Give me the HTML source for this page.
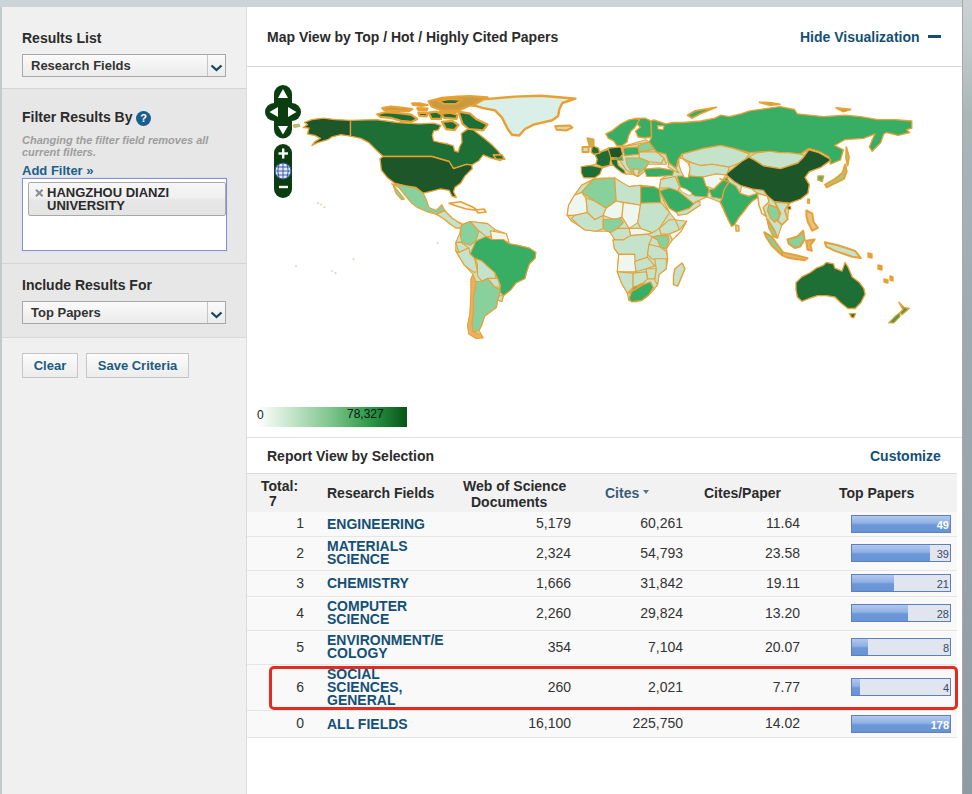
<!DOCTYPE html>
<html><head><meta charset="utf-8">
<style>
*{margin:0;padding:0;box-sizing:border-box}
html,body{width:972px;height:794px;overflow:hidden;background:#c9d0d5;font-family:"Liberation Sans",sans-serif;color:#333}
.abs{position:absolute}
#topbar{position:absolute;left:0;top:0;width:972px;height:7px;background:#cdd4d7}
#lbar{position:absolute;left:0;top:7px;width:2px;height:787px;background:#c1cbcd}
#side{position:absolute;left:2px;top:7px;width:245px;height:787px;background:#f0f0f0;border-right:1px solid #dcdcdc}
.sec2{position:absolute;left:0;width:244px;background:#e7e7e7;border-top:1px solid #d6d6d6}
.h{position:absolute;font-weight:bold;font-size:14px;line-height:16px;color:#2b2b2b;white-space:nowrap}
.sel{position:absolute;width:204px;height:23px;border:1px solid #a8a8a8;background:linear-gradient(#fafafa,#ebebeb);font-size:13px;color:#333;font-weight:bold}
.sel span{position:absolute;left:8px;top:3px;line-height:15px}
.sel i{position:absolute;right:0;top:0;width:18px;height:21px;border-left:1px solid #c4c4c4}

.btn{position:absolute;height:25px;border:1px solid #c6c6c6;background:linear-gradient(#fcfcfc,#ececec);font-size:13px;font-weight:bold;color:#1d5a80;text-align:center;line-height:23px}
#main{position:absolute;left:247px;top:7px;width:715px;height:787px;background:#fff}
#rbar{position:absolute;left:962px;top:0;width:10px;height:794px;background:linear-gradient(#cbd2d5 0px,#c3cacd 40px,#acb6b9 115px,#9faab0 315px,#8f9ba3 794px);border-left:1px solid #a2a8ac}
.t{position:absolute;font-size:14px;line-height:16px;white-space:nowrap;color:#333;text-align:right}
.f{position:absolute;left:327px;font-size:14px;font-weight:bold;color:#145075;line-height:13px;white-space:nowrap}
.row{position:absolute;left:247px;width:710px;background:#f9f9f9;border-bottom:1px solid #e6e6e6}
.bar{position:absolute;left:851px;width:100px;height:18px;border:1px solid #5f80b8;background:#e1e5ef}
.bar b{position:absolute;left:0;top:0;height:16px;background:linear-gradient(#b0c8ee 0%,#90b0e4 45%,#6c98d8 55%,#6893d6 100%)}
.bar span{position:absolute;right:1px;top:3px;font-size:11px;line-height:12px;color:#3a4a66}
.bar span.w{color:#fff;font-weight:bold}
</style></head><body>
<div id="topbar"></div>
<div id="lbar"></div>
<div id="side">
  <div class="h" style="left:20px;top:23px">Results List</div>
  <div class="sel" style="left:20px;top:47px"><span>Research Fields</span><i><svg width="18" height="21" style="position:absolute;left:0;top:0"><polyline points="3.5,10.5 8.5,15 13.5,10.5" fill="none" stroke="#17465a" stroke-width="2.3"/></svg></i></div>
  <div class="sec2" style="top:81px;height:176px"></div>
  <div class="sec2" style="top:256px;height:74px"></div>
  <div style="position:absolute;left:0;top:330px;width:244px;border-top:1px solid #d9d9d9"></div>
  <div class="h" style="left:20px;top:102px">Filter Results By</div>
  <div class="abs" style="left:134px;top:104px;width:15px;height:15px;border-radius:50%;background:#1a5e8e;color:#fff;font-size:11px;font-weight:bold;text-align:center;line-height:15px">?</div>
  <div class="abs" style="left:20px;top:127px;font-size:11px;line-height:12px;font-style:italic;font-weight:bold;color:#9d9d9d;white-space:nowrap">Changing the filter field removes all<br>current filters.</div>
  <div class="abs" style="left:20px;top:156px;font-size:13px;line-height:15px;font-weight:bold;color:#1b5f8c;white-space:nowrap">Add Filter »</div>
  <div class="abs" style="left:20px;top:171px;width:205px;height:73px;background:#fff;border:1px solid #8890d0;box-shadow:0 0 1px 1px #dde0ee"></div>
  <div class="abs" style="left:26px;top:175px;width:198px;height:34px;border:1px solid #aaaaa4;border-radius:2px;background:linear-gradient(#f6f6f6 0%,#f0f0f0 45%,#e6e6e6 55%,#e4e4e4 100%)"></div>
  <svg class="abs" style="left:33px;top:182px" width="9" height="8"><path d="M1 0.8L7.6 7.2M7.6 0.8L1 7.2" stroke="#8c8c8c" stroke-width="2"/></svg>
  <div class="abs" style="left:45px;top:179px;font-size:13px;line-height:13px;font-weight:bold;color:#2a2a2a;white-space:nowrap">HANGZHOU DIANZI<br>UNIVERSITY</div>
  <div class="h" style="left:20px;top:270px">Include Results For</div>
  <div class="sel" style="left:20px;top:294px"><span>Top Papers</span><i><svg width="18" height="21" style="position:absolute;left:0;top:0"><polyline points="3.5,10.5 8.5,15 13.5,10.5" fill="none" stroke="#17465a" stroke-width="2.3"/></svg></i></div>
  <div class="btn" style="left:20px;top:346px;width:56px">Clear</div>
  <div class="btn" style="left:84px;top:346px;width:103px">Save Criteria</div>
</div>
<div id="main">
  <div class="h" style="left:20px;top:22px">Map View by Top / Hot / Highly Cited Papers</div>
  <div class="h" style="left:553px;top:22px;color:#145075">Hide Visualization</div>
  <div class="abs" style="left:681px;top:28px;width:13px;height:3px;background:#124e72"></div>
  <div class="abs" style="left:0;top:59px;width:715px;height:1px;background:#d6d9dc"></div>
  <div class="abs" style="left:10px;top:400px;width:150px;height:20px;background:linear-gradient(90deg,#ffffff 0%,#c0e2c6 25%,#7cc48a 50%,#2c9a4a 75%,#075417 100%)"></div>
  <div class="abs" style="left:10px;top:401px;font-size:12px;line-height:14px;color:#222">0</div>
  <div class="abs" style="left:100px;top:400px;font-size:12px;line-height:14px;color:#111">78,327</div>
  <div class="abs" style="left:0;top:430px;width:715px;height:1px;background:#e0e0e0"></div>
  <div class="h" style="left:20px;top:441px">Report View by Selection</div>
  <div class="h" style="left:623px;top:441px;color:#145075">Customize</div>
  <div class="abs" style="left:0;top:466px;width:710px;height:39px;background:#f2f2f2;border-top:1px solid #dcdcdc"></div>
  <div class="h" style="left:14px;top:471px">Total:</div><div class="h" style="left:22px;top:486px">7</div>
  <div class="h" style="left:80px;top:478px">Research Fields</div>
  <div class="h" style="left:216px;top:471px">Web of Science</div><div class="h" style="left:224px;top:487px">Documents</div>
  <div class="h" style="left:358px;top:478px;color:#3b5a7c">Cites</div>
  <div class="abs" style="left:396px;top:483px;width:0;height:0;border-left:3.5px solid transparent;border-right:3.5px solid transparent;border-top:4px solid #5a708c"></div>
  <div class="h" style="left:457px;top:478px">Cites/Paper</div>
  <div class="h" style="left:592px;top:478px">Top Papers</div>
</div>
<div class="row" style="top:512px;height:25px"></div>
<div class="t" style="left:254px;width:50px;top:515px">1</div>
<div class="f" style="top:518px">ENGINEERING</div>
<div class="t" style="left:471px;width:100px;top:515px">5,179</div>
<div class="t" style="left:583px;width:100px;top:515px">60,261</div>
<div class="t" style="left:700px;width:100px;top:515px">11.64</div>
<div class="bar" style="top:515px"><b style="width:98px"></b><span class="w">49</span></div>
<div class="row" style="top:537px;height:34px"></div>
<div class="t" style="left:254px;width:50px;top:545px">2</div>
<div class="f" style="top:540px">MATERIALS<br>SCIENCE</div>
<div class="t" style="left:471px;width:100px;top:545px">2,324</div>
<div class="t" style="left:583px;width:100px;top:545px">54,793</div>
<div class="t" style="left:700px;width:100px;top:545px">23.58</div>
<div class="bar" style="top:544px"><b style="width:78px"></b><span class="">39</span></div>
<div class="row" style="top:571px;height:26px"></div>
<div class="t" style="left:254px;width:50px;top:575px">3</div>
<div class="f" style="top:577px">CHEMISTRY</div>
<div class="t" style="left:471px;width:100px;top:575px">1,666</div>
<div class="t" style="left:583px;width:100px;top:575px">31,842</div>
<div class="t" style="left:700px;width:100px;top:575px">19.11</div>
<div class="bar" style="top:574px"><b style="width:42px"></b><span class="">21</span></div>
<div class="row" style="top:597px;height:34px"></div>
<div class="t" style="left:254px;width:50px;top:605px">4</div>
<div class="f" style="top:600px">COMPUTER<br>SCIENCE</div>
<div class="t" style="left:471px;width:100px;top:605px">2,260</div>
<div class="t" style="left:583px;width:100px;top:605px">29,824</div>
<div class="t" style="left:700px;width:100px;top:605px">13.20</div>
<div class="bar" style="top:604px"><b style="width:56px"></b><span class="">28</span></div>
<div class="row" style="top:631px;height:34px"></div>
<div class="t" style="left:254px;width:50px;top:639px">5</div>
<div class="f" style="top:634px">ENVIRONMENT/E<br>COLOGY</div>
<div class="t" style="left:471px;width:100px;top:639px">354</div>
<div class="t" style="left:583px;width:100px;top:639px">7,104</div>
<div class="t" style="left:700px;width:100px;top:639px">20.07</div>
<div class="bar" style="top:638px"><b style="width:16px"></b><span class="">8</span></div>
<div class="row" style="top:665px;height:46px"></div>
<div class="t" style="left:254px;width:50px;top:679px">6</div>
<div class="f" style="top:668px">SOCIAL<br>SCIENCES,<br>GENERAL</div>
<div class="t" style="left:471px;width:100px;top:679px">260</div>
<div class="t" style="left:583px;width:100px;top:679px">2,021</div>
<div class="t" style="left:700px;width:100px;top:679px">7.77</div>
<div class="bar" style="top:678px"><b style="width:8px"></b><span class="">4</span></div>
<div class="row" style="top:711px;height:27px"></div>
<div class="t" style="left:254px;width:50px;top:715px">0</div>
<div class="f" style="top:718px">ALL FIELDS</div>
<div class="t" style="left:471px;width:100px;top:715px">16,100</div>
<div class="t" style="left:583px;width:100px;top:715px">225,750</div>
<div class="t" style="left:700px;width:100px;top:715px">14.02</div>
<div class="bar" style="top:715px"><b style="width:98px"></b><span class="w">178</span></div>
<svg class="abs" style="left:0;top:0" width="972" height="794" viewBox="0 0 972 794">
<polygon points="460.7,224.9 470.2,221.5 487.5,223.6 494.7,229.4 506.3,233.7 509.1,243.8 517.8,245.2 529.3,248.1 535.8,252.4 535.1,258.2 529.3,264.0 526.4,272.6 525.0,278.4 516.3,282.7 510.6,289.9 503.4,295.7 501.9,301.4 497.7,300.2 496.3,307.4 490.5,311.8 484.7,316.1 481.9,324.7 479.0,330.5 483.3,337.7 476.1,338.5 469.0,334.0 467.5,326.0 470.0,313.2 471.0,291.6 471.0,278.6 473.2,274.3 464.5,265.4 455.8,251.0 455.8,242.4 460.2,232.3" fill="#c5e2ca" stroke="#e8a035" stroke-width="1.10" stroke-linejoin="round"/>
<polygon points="581.6,185.2 593.1,179.4 601.8,178.0 614.7,178.0 620.5,183.7 629.1,186.6 640.7,185.2 653.6,186.6 659.4,189.5 663.7,201.0 669.5,212.5 675.2,219.7 686.7,221.2 681.0,231.3 672.3,239.9 666.6,248.5 667.7,258.7 666.3,268.8 659.0,274.6 657.6,284.6 653.3,290.4 646.1,297.6 636.0,301.9 628.8,300.5 627.4,293.3 621.6,283.2 617.3,271.7 618.7,254.4 614.4,248.6 613.0,240.0 614.7,239.9 613.3,232.7 607.5,231.3 596.0,231.3 584.5,229.8 578.7,225.5 571.5,221.2 567.2,215.4 568.6,205.3 574.4,195.2" fill="#c5e2ca" stroke="#e8a035" stroke-width="1.10" stroke-linejoin="round"/>
<polygon points="581.2,166.7 591.1,165.4 596.0,164.2 597.3,159.3 594.8,154.3 608.4,148.1 622.0,146.9 638.0,142.0 645.8,139.7 649.1,142.0 656.5,151.9 665.9,154.1 668.8,162.8 661.5,163.0 649.1,161.7 646.7,164.2 644.2,171.6 638.0,176.5 631.9,174.1 625.7,174.1 618.3,165.4 609.6,165.4 602.2,167.9 599.8,174.1 594.8,177.8 583.7,177.8" fill="#c5e2ca" stroke="#e8a035" stroke-width="1.10" stroke-linejoin="round"/>
<polygon points="676.0,168.5 681.8,154.1 703.4,148.4 749.5,152.7 800.2,154.1 808.8,149.8 829.0,158.5 830.9,160.1 820.8,167.3 809.3,171.6 805.0,177.4 809.3,184.6 807.9,193.2 800.7,199.0 789.1,203.3 787.7,219.1 781.9,224.9 777.6,237.9 769.0,227.8 766.1,216.3 757.4,193.2 744.5,210.5 731.5,226.3 720.0,201.9 707.0,197.0 695.0,202.0 700.0,205.3 686.7,214.0 676.7,212.5 669.5,208.2 659.4,190.9 660.8,179.4 673.8,170.4" fill="#c5e2ca" stroke="#e8a035" stroke-width="1.10" stroke-linejoin="round"/>
<polygon points="304.6,122.4 311.9,119.6 323.4,118.1 334.9,119.6 350.5,120.3 350.5,136.1 340.7,134.7 332.0,136.9 327.7,139.7 317.6,142.6 311.9,145.5 314.7,141.9 320.5,138.3 314.7,135.4 307.5,134.0 309.0,128.2 303.2,127.5 307.5,124.6" fill="#1c5629" stroke="#e8a035" stroke-width="1.32" stroke-linejoin="round"/>
<polygon points="350.5,120.3 376.0,119.6 397.6,122.5 419.2,123.9 433.6,123.2 440.8,125.3 438.5,129.8 433.6,131.0 432.3,135.4 433.6,140.9 438.5,142.2 447.8,144.0 453.3,145.9 454.6,150.8 458.3,152.0 459.5,147.1 462.0,142.2 461.4,133.5 465.7,130.4 470.6,127.3 476.0,132.0 483.2,137.6 491.9,144.8 497.6,150.6 503.4,157.8 500.5,160.7 490.4,157.8 483.2,154.9 478.9,160.7 471.7,165.0 466.4,164.4 453.5,168.7 449.1,161.5 431.9,156.5 383.2,156.5 377.5,151.3 368.8,142.6 360.8,138.3 350.5,136.1" fill="#1d6f35" stroke="#e8a035" stroke-width="1.32" stroke-linejoin="round"/>
<polygon points="493.3,154.9 502.0,154.9 504.8,159.2 496.2,159.2" fill="#1d6f35" stroke="#e8a035" stroke-width="1.65" stroke-linejoin="round"/>
<polygon points="383.2,156.5 431.9,156.5 449.1,161.5 453.5,168.7 466.4,164.4 471.7,165.0 472.2,168.7 465.0,175.9 460.7,183.1 454.9,187.4 453.5,191.8 456.3,197.5 452.0,196.1 449.1,190.3 440.5,188.9 429.0,191.8 423.2,193.2 416.0,187.4 405.9,186.0 394.4,183.1 387.2,177.4 381.4,170.2 380.0,158.6" fill="#1c5629" stroke="#e8a035" stroke-width="1.32" stroke-linejoin="round"/>
<polygon points="391.5,183.8 405.9,186.0 416.0,188.2 423.2,193.2 426.1,199.0 429.0,207.6 436.2,210.5 441.9,204.7 444.8,210.5 436.2,214.1 427.5,211.9 417.4,207.6 411.7,203.3 404.5,194.6 398.7,187.4" fill="#88d09c" stroke="#e8a035" stroke-width="1.10" stroke-linejoin="round"/>
<polygon points="393.0,184.6 398.7,191.8 404.5,199.0 401.6,199.7 395.8,193.2" fill="#88d09c" stroke="#e8a035" stroke-width="1.10" stroke-linejoin="round"/>
<polygon points="436.2,214.1 444.8,210.5 447.0,213.0 452.0,218.0 458.0,222.0 462.0,224.0 461.0,228.0 456.0,228.0 450.0,224.0 444.0,219.0" fill="#c5e2ca" stroke="#e8a035" stroke-width="1.43" stroke-linejoin="round"/>
<polygon points="449.1,203.3 460.7,201.8 473.6,207.6 477.9,210.5 466.4,209.0 454.9,205.5" fill="#eef7ef" stroke="#e8a035" stroke-width="1.65" stroke-linejoin="round"/>
<polygon points="476.0,210.0 484.0,209.0 486.0,212.0 478.0,213.0" fill="#eef7ef" stroke="#e8a035" stroke-width="1.65" stroke-linejoin="round"/>
<polygon points="382.3,108.1 390.6,106.5 400.9,107.5 412.2,109.1 409.1,111.1 395.7,111.1 384.4,110.1" fill="#c89a42" stroke="#e8a035" stroke-width="2.20" stroke-linejoin="round"/>
<polygon points="377.2,114.2 385.4,112.2 398.8,113.2 411.2,114.7 417.3,118.9 411.2,121.9 400.9,120.9 390.6,117.8 380.3,116.8" fill="#1d6f35" stroke="#e8a035" stroke-width="2.20" stroke-linejoin="round"/>
<polygon points="412.2,103.4 419.4,103.4 427.6,105.0 421.4,106.0 413.2,105.0" fill="#c89a42" stroke="#e8a035" stroke-width="2.20" stroke-linejoin="round"/>
<polygon points="417.3,108.1 427.6,108.6 426.6,110.6 418.4,110.1" fill="#c89a42" stroke="#e8a035" stroke-width="2.20" stroke-linejoin="round"/>
<polygon points="418.4,112.7 427.6,113.2 426.6,116.3 419.4,115.8" fill="#1d6f35" stroke="#e8a035" stroke-width="2.20" stroke-linejoin="round"/>
<polygon points="428.6,101.4 442.0,97.8 457.4,96.7 470.0,96.2 487.5,97.3 476.0,105.9 470.0,105.5 458.5,110.6 442.0,110.6 431.7,106.5" fill="#c89a42" stroke="#e8a035" stroke-width="2.20" stroke-linejoin="round"/>
<polygon points="438.0,101.0 450.0,99.0 462.0,100.0 456.0,104.0 444.0,104.0" fill="#1d6f35" stroke="#e8a035" stroke-width="2.20" stroke-linejoin="round"/>
<polygon points="428.6,112.7 436.9,111.7 442.0,114.7 441.0,118.9 431.7,118.9" fill="#1d6f35" stroke="#e8a035" stroke-width="2.20" stroke-linejoin="round"/>
<polygon points="441.0,113.7 450.2,112.7 457.4,114.7 456.4,118.9 444.1,117.8" fill="#1d6f35" stroke="#e8a035" stroke-width="2.20" stroke-linejoin="round"/>
<polygon points="442.0,121.9 452.3,120.9 458.5,125.0 454.4,130.2 446.1,129.1" fill="#1d6f35" stroke="#e8a035" stroke-width="2.20" stroke-linejoin="round"/>
<polygon points="458.5,111.7 470.0,113.7 476.0,118.9 487.5,124.6 483.2,130.4 468.8,129.0 462.6,124.0" fill="#1d6f35" stroke="#e8a035" stroke-width="2.20" stroke-linejoin="round"/>
<polygon points="440.0,111.7 457.3,111.7 452.0,113.0 440.0,113.0" fill="#c89a42" stroke="#e8a035" stroke-width="2.20" stroke-linejoin="round"/>
<polygon points="473.1,105.2 483.2,99.4 514.9,96.6 540.8,95.8 559.5,97.3 575.4,98.7 562.4,103.0 559.5,108.8 558.1,116.0 552.3,120.3 533.6,124.6 525.0,129.0 519.2,135.5 512.0,134.7 507.7,129.0 501.9,117.4 494.7,110.2 483.2,108.1" fill="#d9efe8" stroke="#e8a035" stroke-width="2.42" stroke-linejoin="round"/>
<polygon points="555.2,126.1 569.6,125.4 572.5,127.5 566.7,130.4 556.7,129.7" fill="#cfd8b0" stroke="#e8a035" stroke-width="1.98" stroke-linejoin="round"/>
<polygon points="461.6,225.1 470.2,221.5 478.9,230.8 476.0,240.9 470.2,245.2 461.6,242.4 460.2,232.3" fill="#88d09c" stroke="#e8a035" stroke-width="1.10" stroke-linejoin="round"/>
<polygon points="470.2,221.5 487.5,223.6 494.7,229.4 490.4,236.6 486.1,236.6 478.9,230.8" fill="#c5e2ca" stroke="#e8a035" stroke-width="1.10" stroke-linejoin="round"/>
<polygon points="490.4,230.8 506.3,233.7 509.1,242.4 491.9,239.5" fill="#eef7ef" stroke="#e8a035" stroke-width="1.10" stroke-linejoin="round"/>
<polygon points="455.8,242.4 461.6,242.4 468.8,248.1 458.7,252.4" fill="#c5e2ca" stroke="#e8a035" stroke-width="1.10" stroke-linejoin="round"/>
<polygon points="458.7,252.4 468.8,248.1 470.2,253.9 474.6,258.2 477.4,271.2 474.6,272.6 464.5,265.4 455.8,251.0" fill="#c5e2ca" stroke="#e8a035" stroke-width="1.10" stroke-linejoin="round"/>
<polygon points="470.2,253.9 476.0,240.9 486.1,236.6 491.9,239.5 503.4,239.5 509.1,243.8 517.8,245.2 529.3,248.1 535.8,252.4 535.1,258.2 529.3,264.0 526.4,272.6 525.0,278.4 516.3,282.7 510.6,289.9 503.4,295.7 499.1,291.3 500.5,285.6 497.6,278.4 494.7,272.6 487.5,266.9 481.8,261.1 474.6,258.2" fill="#38ad64" stroke="#e8a035" stroke-width="1.10" stroke-linejoin="round"/>
<polygon points="474.6,258.2 481.8,261.1 494.7,272.6 496.2,279.8 487.5,278.4 481.8,281.3 477.4,275.5 477.4,264.0" fill="#c5e2ca" stroke="#e8a035" stroke-width="1.10" stroke-linejoin="round"/>
<polygon points="487.5,278.4 497.6,278.4 500.5,287.0 494.7,287.0" fill="#c5e2ca" stroke="#e8a035" stroke-width="1.10" stroke-linejoin="round"/>
<polygon points="476.1,281.5 481.8,281.3 487.5,278.4 494.7,287.0 500.5,289.9 497.7,300.2 496.3,307.4 490.5,311.8 484.7,316.1 481.9,324.7 479.0,330.5 473.2,331.9 471.8,324.7 473.2,313.2 473.2,298.8" fill="#88d09c" stroke="#e8a035" stroke-width="1.10" stroke-linejoin="round"/>
<polygon points="499.1,295.7 503.4,295.7 501.9,301.4 497.6,300.0" fill="#c5e2ca" stroke="#e8a035" stroke-width="1.10" stroke-linejoin="round"/>
<polygon points="473.2,274.3 476.0,281.5 473.2,298.8 473.2,313.2 471.8,324.7 473.2,331.9 479.0,333.4 483.3,337.7 476.1,338.5 469.0,334.0 467.5,326.0 470.0,313.2 471.0,291.6 471.0,278.6" fill="#e9b060" stroke="#e8a035" stroke-width="0.88" stroke-linejoin="round"/>
<polygon points="622.0,146.9 649.1,142.0 656.5,151.9 664.0,158.0 666.4,164.2 646.7,164.2 644.2,171.6 638.0,176.5 631.9,174.1 625.7,169.1 620.7,161.7 622.0,155.6" fill="#c5e2ca" stroke="#e8a035" stroke-width="1.10" stroke-linejoin="round"/>
<polygon points="623.2,148.1 638.0,146.9 639.3,154.3 624.4,155.6" fill="#38ad64" stroke="#e8a035" stroke-width="1.10" stroke-linejoin="round"/>
<polygon points="639.3,151.9 656.5,151.9 664.0,158.0 661.5,163.0 649.1,161.7 639.3,158.0" fill="#c5e2ca" stroke="#e8a035" stroke-width="1.10" stroke-linejoin="round"/>
<polygon points="638.0,145.7 649.1,142.0 654.1,149.4 639.3,151.9" fill="#88d09c" stroke="#e8a035" stroke-width="1.10" stroke-linejoin="round"/>
<polygon points="625.7,158.0 639.3,158.0 649.1,161.7 646.7,166.7 638.0,174.1 631.9,172.8 626.9,164.2" fill="#88d09c" stroke="#e8a035" stroke-width="1.10" stroke-linejoin="round"/>
<polygon points="633.1,169.1 639.3,169.1 638.0,176.5 634.3,174.1" fill="#c5e2ca" stroke="#e8a035" stroke-width="1.10" stroke-linejoin="round"/>
<polygon points="610.9,158.0 622.0,155.6 623.2,160.5 617.0,160.5" fill="#38ad64" stroke="#e8a035" stroke-width="1.10" stroke-linejoin="round"/>
<polygon points="608.4,148.1 620.7,146.9 622.6,154.3 619.5,158.0 609.6,157.4" fill="#1c5629" stroke="#e8a035" stroke-width="1.10" stroke-linejoin="round"/>
<polygon points="594.8,154.3 608.4,149.4 610.9,158.0 609.6,165.4 602.2,166.7 596.0,164.2 597.3,159.3" fill="#1d6f35" stroke="#e8a035" stroke-width="1.10" stroke-linejoin="round"/>
<polygon points="581.2,166.7 591.1,165.4 602.2,167.9 599.8,174.1 594.8,177.8 583.7,177.8 581.2,172.8" fill="#1d6f35" stroke="#e8a035" stroke-width="1.10" stroke-linejoin="round"/>
<polygon points="610.9,159.3 617.0,159.3 618.3,165.4 624.4,170.4 625.7,174.1 622.0,172.8 615.8,167.9 612.1,164.2" fill="#1d6f35" stroke="#e8a035" stroke-width="1.10" stroke-linejoin="round"/>
<polygon points="592.3,145.7 598.5,148.1 599.8,153.1 593.6,154.3 591.1,151.9" fill="#1d6f35" stroke="#e8a035" stroke-width="1.43" stroke-linejoin="round"/>
<polygon points="587.4,138.3 593.6,139.5 593.6,145.7 589.9,146.9" fill="#9fc070" stroke="#e8a035" stroke-width="1.98" stroke-linejoin="round"/>
<polygon points="582.5,146.9 588.6,146.9 588.6,151.9 582.5,151.9" fill="#c5e2ca" stroke="#e8a035" stroke-width="1.98" stroke-linejoin="round"/>
<polygon points="644.2,169.1 659.0,167.9 673.8,170.4 672.6,175.3 656.5,176.5 646.7,176.5" fill="#38ad64" stroke="#e8a035" stroke-width="1.10" stroke-linejoin="round"/>
<polygon points="605.8,133.9 612.3,130.6 620.6,124.0 628.8,119.9 636.0,118.5 640.0,119.0 637.0,124.0 634.5,128.0 631.0,131.0 628.5,136.0 627.0,142.0 622.0,145.7 617.0,145.7 613.3,140.7 608.4,138.3" fill="#38ad64" stroke="#e8a035" stroke-width="1.32" stroke-linejoin="round"/>
<polygon points="636.0,118.5 645.3,118.2 651.0,121.0 651.6,137.0 645.0,138.0 638.0,137.0 635.5,131.0 640.5,127.3 637.0,124.0 640.0,119.0" fill="#38ad64" stroke="#e8a035" stroke-width="1.32" stroke-linejoin="round"/>
<polygon points="654.0,120.0 665.9,123.9 673.1,122.5 683.2,122.5 700.5,121.0 714.9,118.1 720.7,115.2 729.3,116.7 740.8,113.8 749.5,110.9 763.9,108.8 780.0,106.6 794.4,109.5 797.3,113.8 823.2,116.7 844.8,115.2 860.7,116.7 877.9,119.6 895.2,119.6 911.8,121.0 911.8,128.2 906.7,129.7 909.6,132.5 898.1,135.4 886.6,132.5 883.7,134.0 880.8,142.6 872.2,151.3 869.3,146.9 872.2,139.7 875.1,134.0 863.5,138.3 844.8,139.7 834.7,145.5 843.4,149.8 840.5,159.9 830.4,164.2 829.0,157.0 818.9,151.3 808.8,148.4 800.2,154.1 788.6,152.7 780.0,152.7 769.6,151.3 749.5,152.7 733.6,148.4 720.7,145.5 703.4,148.4 681.8,154.1 678.0,160.0 676.0,168.5 668.8,162.8 665.9,154.1 656.5,151.9 649.1,142.0 651.6,137.0 651.0,121.0" fill="#38ad64" stroke="#e8a035" stroke-width="1.32" stroke-linejoin="round"/>
<polygon points="687.5,115.2 694.7,110.9 716.3,107.3 700.5,113.8 691.9,118.1" fill="#38ad64" stroke="#e8a035" stroke-width="1.76" stroke-linejoin="round"/>
<polygon points="759.5,102.3 772.5,103.0 780.0,104.4 769.6,105.2" fill="#38ad64" stroke="#e8a035" stroke-width="1.76" stroke-linejoin="round"/>
<polygon points="836.2,108.0 850.6,109.5 843.4,111.6" fill="#38ad64" stroke="#e8a035" stroke-width="1.76" stroke-linejoin="round"/>
<polygon points="681.8,154.1 703.4,148.4 720.7,145.5 733.6,148.4 749.5,154.1 743.7,161.3 729.3,167.1 712.0,164.2 700.5,165.6 691.9,162.8 683.2,158.5" fill="#c5e2ca" stroke="#e8a035" stroke-width="1.10" stroke-linejoin="round"/>
<polygon points="689.0,162.0 700.5,165.6 712.0,164.2 729.3,167.1 727.0,175.0 716.0,174.0 703.0,177.0 690.0,176.0" fill="#c5e2ca" stroke="#e8a035" stroke-width="1.10" stroke-linejoin="round"/>
<polygon points="668.8,162.8 676.0,168.5 679.0,173.0 673.8,170.4 668.0,167.0" fill="#c5e2ca" stroke="#e8a035" stroke-width="1.10" stroke-linejoin="round"/>
<polygon points="677.0,176.0 690.0,176.0 703.0,177.0 706.0,184.0 709.0,190.0 707.0,197.0 695.0,196.0 686.0,191.0 680.0,186.0" fill="#38ad64" stroke="#e8a035" stroke-width="1.10" stroke-linejoin="round"/>
<polygon points="703.0,177.0 716.0,174.0 726.0,175.0 721.0,182.0 714.0,189.0 706.0,186.0" fill="#eef7ef" stroke="#e8a035" stroke-width="1.10" stroke-linejoin="round"/>
<polygon points="709.0,190.0 714.0,189.0 721.0,182.0 727.0,177.0 729.0,182.0 724.0,190.0 722.0,199.0 712.0,197.0" fill="#38ad64" stroke="#e8a035" stroke-width="1.10" stroke-linejoin="round"/>
<polygon points="660.8,179.4 675.2,176.5 679.5,186.6 678.1,190.9 669.5,188.0 659.4,188.0" fill="#c5e2ca" stroke="#e8a035" stroke-width="1.10" stroke-linejoin="round"/>
<polygon points="659.4,190.9 669.5,188.0 678.1,190.9 685.3,196.7 694.0,203.9 689.6,208.2 676.7,212.5 669.5,208.2" fill="#38ad64" stroke="#e8a035" stroke-width="1.10" stroke-linejoin="round"/>
<polygon points="676.7,212.5 689.6,208.2 695.4,202.4 700.0,201.0 700.0,205.3 686.7,214.0 678.1,215.4" fill="#c5e2ca" stroke="#e8a035" stroke-width="1.10" stroke-linejoin="round"/>
<polygon points="748.8,157.2 756.0,152.9 769.6,151.3 780.0,152.7 788.6,152.7 800.2,154.1 806.4,155.8 803.5,161.5 797.8,163.0 780.5,168.7 763.2,165.8 754.6,160.1" fill="#c5e2ca" stroke="#e8a035" stroke-width="1.10" stroke-linejoin="round"/>
<polygon points="726.4,175.0 727.2,173.0 734.4,167.3 741.6,161.5 748.8,157.2 754.6,160.1 763.2,165.8 780.5,168.7 797.8,163.0 803.5,157.2 808.8,149.8 818.9,152.7 829.0,158.5 830.9,160.1 820.8,167.3 809.3,171.6 805.0,177.4 809.3,184.6 807.9,193.2 800.7,199.0 789.1,203.3 774.7,201.9 767.5,196.1 763.2,190.3 751.7,188.9 741.6,186.0 734.4,181.7" fill="#1c5629" stroke="#e8a035" stroke-width="1.32" stroke-linejoin="round"/>
<polygon points="787.7,206.2 790.6,206.5 791.0,209.0 788.0,209.5" fill="#1c5629" stroke="#e8a035" stroke-width="1.10" stroke-linejoin="round"/>
<polygon points="817.9,175.9 823.7,175.9 822.3,181.7 817.9,180.2" fill="#5ab070" stroke="#e8a035" stroke-width="1.32" stroke-linejoin="round"/>
<polygon points="825.1,184.6 835.2,178.8 842.4,173.0 845.3,164.4 846.7,171.6 843.9,178.8 835.2,183.1 826.6,187.4" fill="#a8c878" stroke="#e8a035" stroke-width="1.98" stroke-linejoin="round"/>
<polygon points="846.3,147.0 849.1,157.0 847.7,165.7 846.0,158.0" fill="#a8c878" stroke="#e8a035" stroke-width="1.65" stroke-linejoin="round"/>
<polygon points="720.0,178.8 728.6,181.7 735.8,186.0 740.2,193.2 748.8,196.1 757.4,193.2 760.3,196.1 753.1,200.4 748.8,204.7 744.5,210.5 738.7,217.7 734.4,224.9 731.5,226.3 725.8,214.8 722.9,207.6 720.0,201.9 722.0,199.0 724.0,190.0 729.0,182.0" fill="#38ad64" stroke="#e8a035" stroke-width="1.32" stroke-linejoin="round"/>
<polygon points="735.8,225.0 738.7,226.0 739.0,231.0 736.0,231.0" fill="#c5e2ca" stroke="#e8a035" stroke-width="1.43" stroke-linejoin="round"/>
<polygon points="741.6,186.0 751.7,188.9 757.4,193.2 748.8,196.1 740.2,193.2" fill="#eef7ef" stroke="#e8a035" stroke-width="1.10" stroke-linejoin="round"/>
<polygon points="757.4,193.2 767.5,196.1 769.0,201.9 763.2,207.6 766.1,216.3 761.8,213.4 758.9,204.7" fill="#eef7ef" stroke="#e8a035" stroke-width="1.43" stroke-linejoin="round"/>
<polygon points="769.0,204.7 777.6,207.6 780.5,217.7 774.7,222.0 770.4,217.7 767.5,210.5" fill="#88d09c" stroke="#e8a035" stroke-width="1.43" stroke-linejoin="round"/>
<polygon points="774.7,201.9 789.1,203.3 784.8,210.5 787.7,219.1 781.9,224.9 777.6,220.6 780.5,213.4" fill="#c5e2ca" stroke="#e8a035" stroke-width="1.65" stroke-linejoin="round"/>
<polygon points="767.5,219.1 774.7,230.7 777.6,237.9 773.3,236.4 769.0,227.8" fill="#88d09c" stroke="#e8a035" stroke-width="1.65" stroke-linejoin="round"/>
<polygon points="806.4,210.5 812.2,213.4 813.6,222.0 817.9,227.8 812.2,230.7 807.9,222.0 806.4,216.3" fill="#e8c080" stroke="#e8a035" stroke-width="1.98" stroke-linejoin="round"/>
<polygon points="807.9,199.0 809.5,199.5 809.3,203.3 807.5,203.0" fill="#e8c080" stroke="#e8a035" stroke-width="1.43" stroke-linejoin="round"/>
<polygon points="764.3,232.2 771.5,236.5 778.7,246.6 783.0,252.4 780.2,253.8 771.5,245.2 765.8,236.5" fill="#88d09c" stroke="#e8a035" stroke-width="1.98" stroke-linejoin="round"/>
<polygon points="783.0,252.4 796.0,255.2 807.5,258.1 804.6,260.3 788.8,258.1 781.6,255.2" fill="#d8b878" stroke="#e8a035" stroke-width="1.98" stroke-linejoin="round"/>
<polygon points="787.4,239.4 797.4,236.5 803.2,230.8 804.6,239.4 800.3,246.6 794.6,248.0 788.8,243.7" fill="#88d09c" stroke="#e8a035" stroke-width="1.98" stroke-linejoin="round"/>
<polygon points="806.1,240.8 814.7,239.4 810.4,245.2 811.9,250.9 807.5,249.5" fill="#d8b878" stroke="#e8a035" stroke-width="1.98" stroke-linejoin="round"/>
<polygon points="824.8,242.3 837.8,245.2 846.4,248.0 855.1,250.9 860.8,258.1 852.2,256.7 843.5,253.8 834.9,250.9 826.3,246.6" fill="#c5e2ca" stroke="#e8a035" stroke-width="1.98" stroke-linejoin="round"/>
<polygon points="868.0,253.0 872.0,254.0 872.0,258.0 868.0,257.0" fill="#e8a035" stroke="#e8a035" stroke-width="1.32" stroke-linejoin="round"/>
<polygon points="878.0,265.0 882.0,266.0 882.0,270.0 878.0,269.0" fill="#e8a035" stroke="#e8a035" stroke-width="1.32" stroke-linejoin="round"/>
<polygon points="890.0,276.0 893.0,277.0 893.0,281.0 890.0,280.0" fill="#e8a035" stroke="#e8a035" stroke-width="1.32" stroke-linejoin="round"/>
<polygon points="884.0,279.0 888.0,280.0 888.0,283.0 884.0,282.0" fill="#e8a035" stroke="#e8a035" stroke-width="1.32" stroke-linejoin="round"/>
<polygon points="796.0,282.6 801.8,276.9 810.4,272.5 816.2,268.2 823.4,265.3 826.3,262.4 833.5,263.9 834.9,268.2 842.1,271.1 845.0,262.4 847.9,266.8 852.2,276.9 859.4,282.6 863.7,288.4 865.1,294.1 860.8,302.8 855.1,308.5 847.9,308.5 840.7,302.8 834.9,297.0 826.3,295.6 817.6,295.6 809.0,298.5 801.8,301.3 797.4,297.0 796.0,289.8" fill="#1d6f35" stroke="#e8a035" stroke-width="1.32" stroke-linejoin="round"/>
<polygon points="849.5,313.7 855.7,313.7 853.7,317.8 851.6,317.3" fill="#1d6f35" stroke="#e8a035" stroke-width="1.32" stroke-linejoin="round"/>
<polygon points="898.9,302.3 904.1,307.5 909.2,308.5 902.0,314.7 900.0,312.6 903.0,309.5" fill="#4a9a50" stroke="#e8a035" stroke-width="1.43" stroke-linejoin="round"/>
<polygon points="900.0,312.6 895.8,315.7 891.7,319.8 888.6,322.9 893.8,322.9 900.0,316.7" fill="#4a9a50" stroke="#e8a035" stroke-width="1.10" stroke-linejoin="round"/>
<polygon points="581.6,185.2 593.1,179.4 581.6,192.4 574.4,195.2" fill="#c5e2ca" stroke="#e8a035" stroke-width="1.10" stroke-linejoin="round"/>
<polygon points="581.6,192.4 593.1,179.4 614.7,178.0 616.2,201.0 606.1,208.2 594.6,201.0" fill="#88d09c" stroke="#e8a035" stroke-width="1.10" stroke-linejoin="round"/>
<polygon points="568.6,205.3 574.4,195.2 581.6,192.4 586.0,198.1 587.4,212.5 574.4,215.4 567.2,215.4" fill="#eef7ef" stroke="#e8a035" stroke-width="1.10" stroke-linejoin="round"/>
<polygon points="586.0,198.1 594.6,201.0 606.1,208.2 603.2,215.4 594.6,219.7 587.4,212.5" fill="#c5e2ca" stroke="#e8a035" stroke-width="1.10" stroke-linejoin="round"/>
<polygon points="606.1,208.2 616.2,201.0 623.4,202.4 621.9,216.9 614.7,219.7 603.2,215.4" fill="#eef7ef" stroke="#e8a035" stroke-width="1.10" stroke-linejoin="round"/>
<polygon points="614.7,178.0 629.1,186.6 640.7,185.2 640.7,205.3 623.4,202.4 616.2,201.0" fill="#c5e2ca" stroke="#e8a035" stroke-width="1.10" stroke-linejoin="round"/>
<polygon points="640.7,186.6 653.6,186.6 659.4,189.5 660.8,202.4 640.7,203.2" fill="#38ad64" stroke="#e8a035" stroke-width="1.10" stroke-linejoin="round"/>
<polygon points="623.4,202.4 640.7,205.3 637.8,222.6 629.1,228.4 621.9,216.9" fill="#eef7ef" stroke="#e8a035" stroke-width="1.10" stroke-linejoin="round"/>
<polygon points="640.7,203.2 660.8,202.4 669.5,212.5 659.4,228.4 652.2,232.7 640.7,228.4 637.8,222.6" fill="#c5e2ca" stroke="#e8a035" stroke-width="1.10" stroke-linejoin="round"/>
<polygon points="659.4,228.4 669.5,219.7 675.2,219.7 679.5,229.8 669.5,234.1 660.8,234.1" fill="#c5e2ca" stroke="#e8a035" stroke-width="1.10" stroke-linejoin="round"/>
<polygon points="679.5,229.8 686.7,221.2 681.0,231.3 672.3,239.9 669.5,234.1" fill="#eef7ef" stroke="#e8a035" stroke-width="1.10" stroke-linejoin="round"/>
<polygon points="571.5,218.3 574.4,215.4 587.4,212.5 594.6,219.7 603.2,215.4 603.2,228.4 596.0,231.3 584.5,229.8 578.7,225.5" fill="#c5e2ca" stroke="#e8a035" stroke-width="1.10" stroke-linejoin="round"/>
<polygon points="603.2,219.7 620.5,218.3 623.4,222.6 617.6,228.4 610.4,232.7 603.2,228.4" fill="#88d09c" stroke="#e8a035" stroke-width="1.10" stroke-linejoin="round"/>
<polygon points="629.1,228.4 640.7,228.4 652.2,232.7 647.9,234.1 630.6,235.6" fill="#eef7ef" stroke="#e8a035" stroke-width="1.10" stroke-linejoin="round"/>
<polygon points="617.6,228.4 629.1,228.4 630.6,235.6 623.4,239.9 614.7,239.9 610.4,232.7" fill="#c5e2ca" stroke="#e8a035" stroke-width="1.10" stroke-linejoin="round"/>
<polygon points="613.0,240.0 614.7,239.9 623.4,239.9 630.6,235.6 647.9,234.1 652.2,237.0 649.0,244.3 647.5,257.3 634.6,261.6 634.6,254.4 618.7,254.4 614.4,248.6" fill="#c5e2ca" stroke="#e8a035" stroke-width="1.10" stroke-linejoin="round"/>
<polygon points="657.6,240.0 652.2,237.0 658.0,235.6 668.0,235.6 669.1,240.0 666.3,248.6 660.5,247.2" fill="#88d09c" stroke="#e8a035" stroke-width="1.10" stroke-linejoin="round"/>
<polygon points="649.0,244.3 660.5,247.2 666.3,251.5 667.7,258.7 661.9,261.6 651.9,258.7 647.5,254.4" fill="#c5e2ca" stroke="#e8a035" stroke-width="1.10" stroke-linejoin="round"/>
<polygon points="618.7,254.4 634.6,254.4 636.0,271.7 617.3,271.7" fill="#eef7ef" stroke="#e8a035" stroke-width="1.10" stroke-linejoin="round"/>
<polygon points="634.6,261.6 647.5,257.3 654.7,265.9 646.1,268.8 636.0,271.7" fill="#c5e2ca" stroke="#e8a035" stroke-width="1.10" stroke-linejoin="round"/>
<polygon points="654.7,258.7 666.3,258.7 666.3,268.8 659.0,274.6 657.6,284.6 654.7,280.3 656.2,268.8" fill="#c5e2ca" stroke="#e8a035" stroke-width="1.10" stroke-linejoin="round"/>
<polygon points="646.1,268.8 656.2,268.8 654.7,278.9 647.5,278.9" fill="#c5e2ca" stroke="#e8a035" stroke-width="1.10" stroke-linejoin="round"/>
<polygon points="617.3,271.7 633.1,273.1 633.1,287.5 627.4,293.3 621.6,283.2" fill="#c5e2ca" stroke="#e8a035" stroke-width="1.10" stroke-linejoin="round"/>
<polygon points="633.1,273.1 646.1,271.7 647.5,278.9 643.2,283.2 633.1,287.5" fill="#c5e2ca" stroke="#e8a035" stroke-width="1.10" stroke-linejoin="round"/>
<polygon points="628.8,293.3 643.2,284.6 650.4,281.8 653.3,287.5 649.0,294.7 641.8,300.5 631.7,301.9 628.8,299.0 633.1,287.5 643.2,283.2" fill="#38ad64" stroke="#e8a035" stroke-width="1.32" stroke-linejoin="round"/>
<polygon points="674.9,268.8 682.1,263.0 685.0,268.8 680.7,278.9 677.8,286.1 673.5,284.6 673.5,276.0" fill="#c5e2ca" stroke="#e8a035" stroke-width="1.43" stroke-linejoin="round"/>
<polygon points="679.0,158.0 683.0,159.0 688.0,163.0 690.0,168.0 689.0,174.0 688.0,178.0 684.0,177.0 681.0,171.0 679.0,165.0" fill="#ffffff" stroke="#e8a035" stroke-width="1.10" stroke-linejoin="round"/>
<polygon points="680.0,187.0 686.0,189.0 692.0,193.0 690.0,196.0 684.0,193.0 680.0,190.0" fill="#ffffff" stroke="#e8a035" stroke-width="0.88" stroke-linejoin="round"/>
<polygon points="317.1,202.6 318.7,202.6 318.7,203.8 317.1,203.8" fill="#dcc4a4" stroke="#e8d8c0" stroke-width="0.33" stroke-linejoin="round"/>
<polygon points="320.2,203.9 321.8,203.9 321.8,205.1 320.2,205.1" fill="#dcc4a4" stroke="#e8d8c0" stroke-width="0.33" stroke-linejoin="round"/>
<polygon points="323.6,206.7 325.2,206.7 325.2,207.9 323.6,207.9" fill="#dcc4a4" stroke="#e8d8c0" stroke-width="0.33" stroke-linejoin="round"/>
<polygon points="295.2,265.4 296.8,265.4 296.8,266.6 295.2,266.6" fill="#dcc4a4" stroke="#e8d8c0" stroke-width="0.33" stroke-linejoin="round"/>
<polygon points="334.7,272.4 336.3,272.4 336.3,273.6 334.7,273.6" fill="#dcc4a4" stroke="#e8d8c0" stroke-width="0.33" stroke-linejoin="round"/>
<polygon points="331.2,270.4 332.8,270.4 332.8,271.6 331.2,271.6" fill="#dcc4a4" stroke="#e8d8c0" stroke-width="0.33" stroke-linejoin="round"/>
<polygon points="352.7,258.4 354.3,258.4 354.3,259.6 352.7,259.6" fill="#dcc4a4" stroke="#e8d8c0" stroke-width="0.33" stroke-linejoin="round"/>
<polygon points="436.8,242.3 438.4,242.3 438.4,243.5 436.8,243.5" fill="#dcc4a4" stroke="#e8d8c0" stroke-width="0.33" stroke-linejoin="round"/>
<polygon points="293.0,125.0 299.0,124.0 300.0,126.5 294.0,127.5" fill="#88d09c" stroke="#e8a035" stroke-width="0.88" stroke-linejoin="round"/>
<polygon points="657.6,125.6 664.2,126.0 663.0,129.8 658.0,129.0" fill="#ffffff" stroke="#e8a035" stroke-width="1.10" stroke-linejoin="round"/>
<g>
<rect x="274" y="85" width="18" height="53.5" rx="9" ry="9" fill="#0b3d10"/>
<rect x="265" y="103" width="36" height="18" rx="9" ry="9" fill="#0b3d10"/>
<polygon points="283,89 278,98 288,98" fill="#fff"/>
<polygon points="283,134.5 278,126 288,126" fill="#fff"/>
<polygon points="269.5,112 278,107 278,117" fill="#fff"/>
<polygon points="296.5,112 288,107 288,117" fill="#fff"/>
<rect x="274" y="144" width="18" height="54" rx="9" ry="9" fill="#0b3d10"/>
<rect x="278.5" y="152.3" width="9.5" height="2.4" fill="#fff"/><rect x="282" y="148.5" width="2.4" height="10" fill="#fff"/>
<rect x="279" y="185.8" width="9" height="2.4" fill="#fff"/>
<circle cx="283" cy="171" r="8" fill="#e4e8f4" stroke="#3050a0" stroke-width="1"/>
<path d="M275.5 171h15M283 163v16M276.5 167h13M276.5 175h13M279 163.8q-2.5 7.2 0 14.4M287 163.8q2.5 7.2 0 14.4" stroke="#3050a0" stroke-width="0.9" fill="none"/>
</g>
</svg>
<div class="abs" style="left:269px;top:666px;width:689px;height:44px;border:3px solid #e42b20;border-radius:5px"></div>
<div id="rbar"></div>
</body></html>
